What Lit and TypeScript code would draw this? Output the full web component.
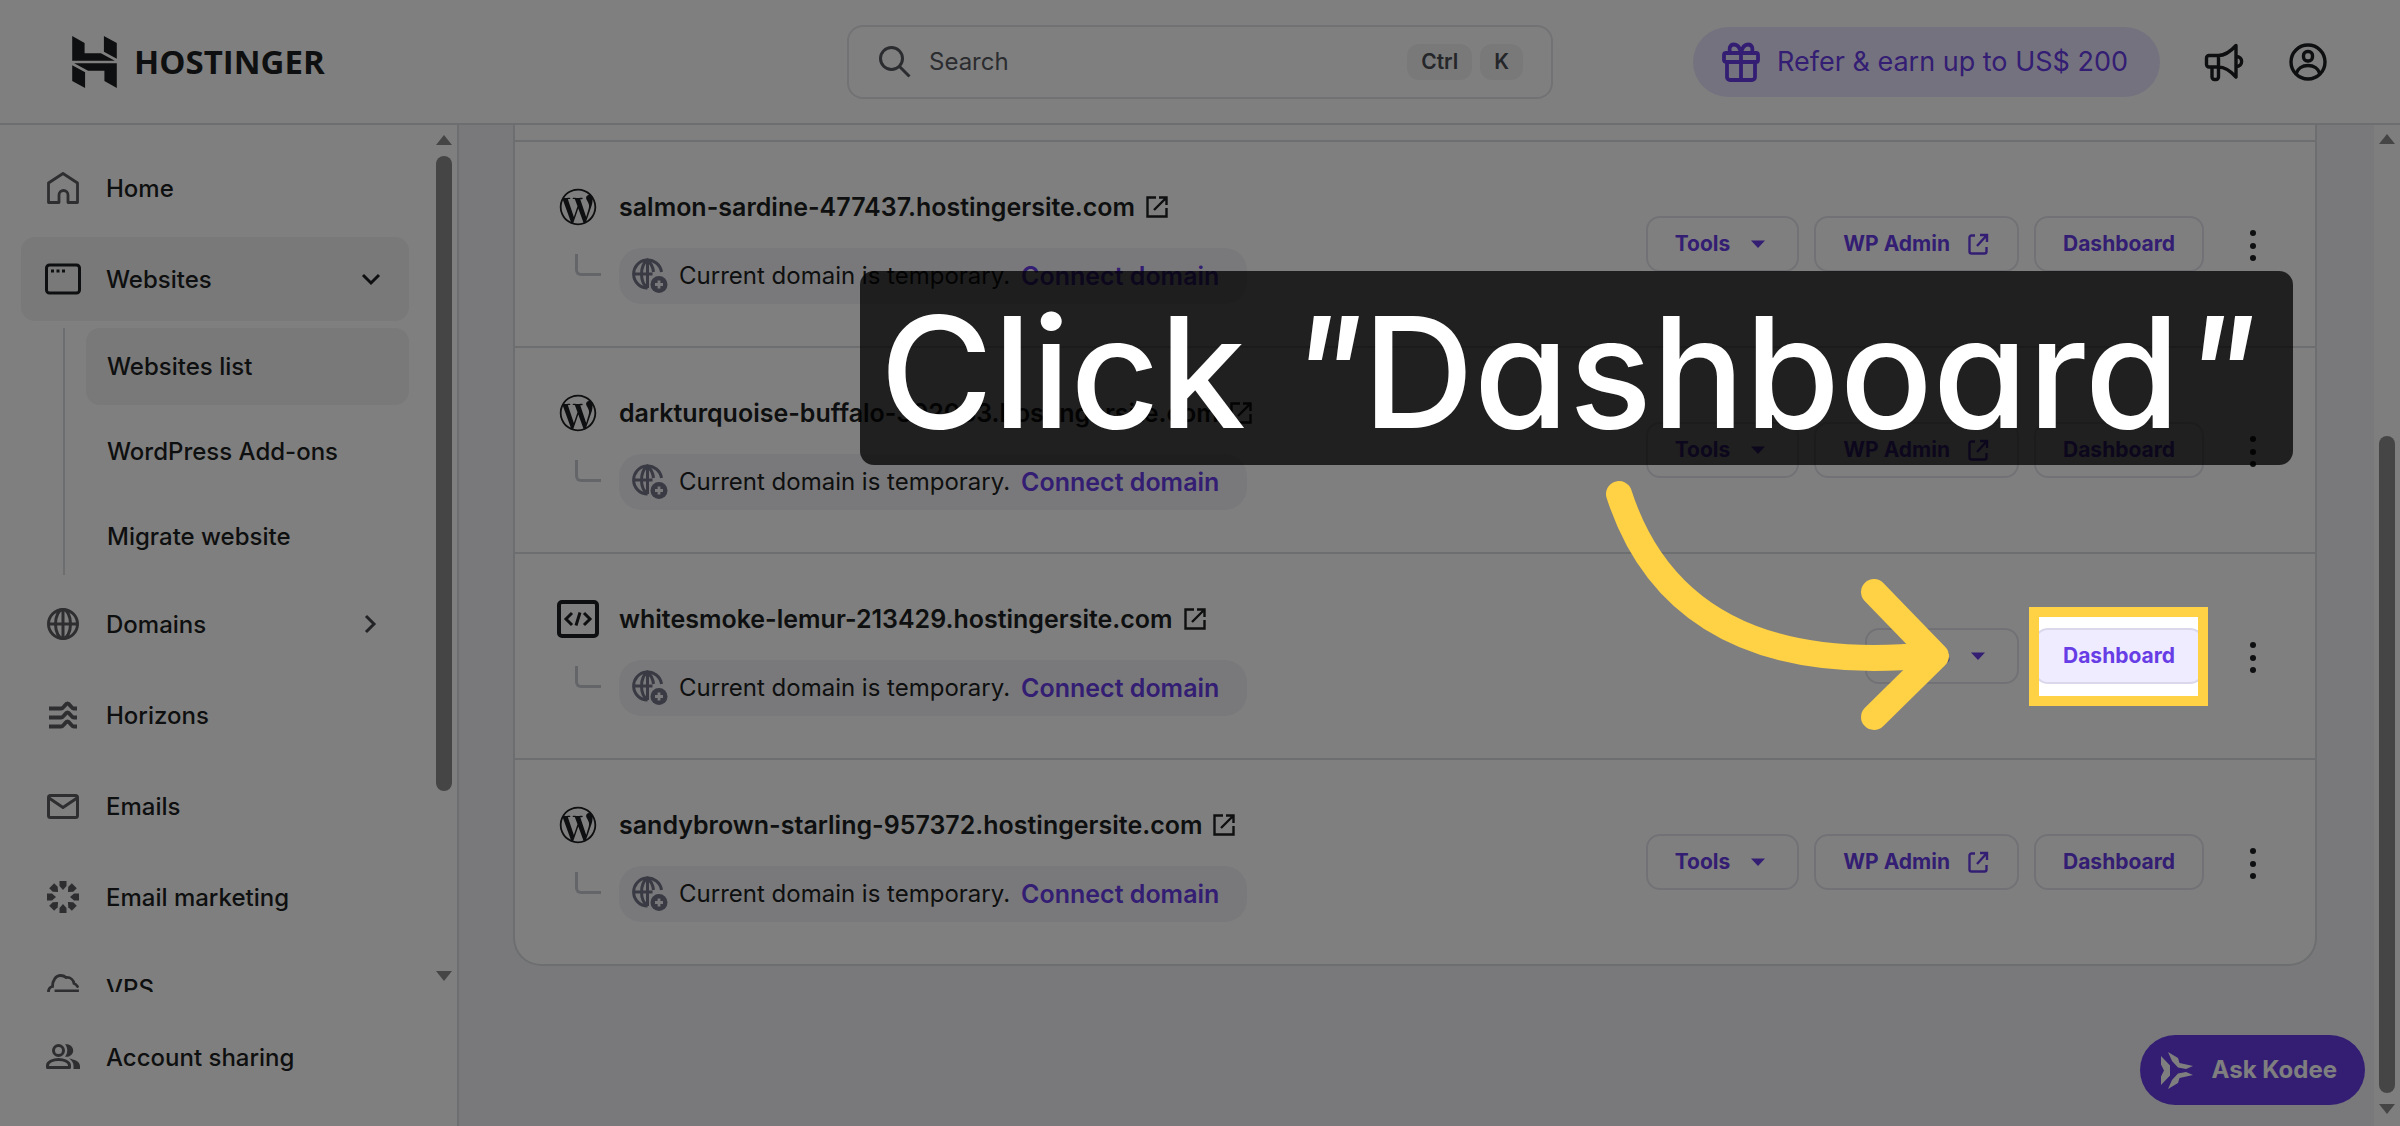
import { LitElement, html, css, svg, nothing, TemplateResult } from "lit";
import { customElement } from "lit/decorators.js";
import { classMap } from "lit/directives/class-map.js";

interface Site {
  domain: string;
  kind: "wordpress" | "code";
  highlighted?: boolean;
}

interface NavItem {
  label: string;
  icon: TemplateResult;
  chevron?: "down" | "right";
  active?: boolean;
  children?: string[];
}

const homeIcon = html`<svg class="nav-icon" viewBox="-2 -2 36 36" aria-hidden="true">
  <path d="M1.500 11 16 1.500 30.500 11V30.500H21V23a4.500 4.500 0 0 0-9 0v7.500H1.500Z" fill="none" stroke="currentColor" stroke-width="2.800" stroke-linejoin="round"/>
</svg>`;

const windowIcon = html`<svg class="nav-icon dark" viewBox="0 0 36 36" aria-hidden="true">
  <rect x="1.500" y="4" width="33" height="28" rx="3" fill="none" stroke="currentColor" stroke-width="3"/>
  <path d="M6 8.500h3v3H6zM11.500 8.500h3v3h-3zM17 8.500h3v3h-3z" fill="currentColor"/>
</svg>`;

const globeIcon = html`<svg class="nav-icon" viewBox="-2 -2 36 36" aria-hidden="true">
  <g fill="none" stroke="currentColor" stroke-width="3">
    <circle cx="16" cy="16" r="14.500"/><ellipse cx="16" cy="16" rx="7.500" ry="14.500"/>
    <path d="M16 1.500v29M1.500 16h29"/>
  </g>
</svg>`;

const horizonsIcon = html`<svg class="nav-icon" viewBox="-4 -4 36 36" aria-hidden="true">
  <g fill="none" stroke="currentColor" stroke-width="4" stroke-linejoin="round">
    <path d="M0 7.500h12c3 0 4-5 6.500-5S22 7.500 25 7.500h3"/>
    <path d="M0 16.500h12c3 0 4-5 6.500-5s3.500 5 6.500 5h3"/>
    <path d="M0 25.500h12c3 0 4-5 6.500-5s3.500 5 6.500 5h3"/>
  </g>
</svg>`;

const mailIcon = html`<svg class="nav-icon" viewBox="-2 -2 36 36" aria-hidden="true">
  <g fill="none" stroke="currentColor" stroke-width="3" stroke-linejoin="round">
    <rect x="1.500" y="5.500" width="29" height="22" rx="2"/><path d="m2 8 14 9.500L30 8"/>
  </g>
</svg>`;

const burstIcon = html`<svg class="nav-icon" viewBox="-18 -18 36 36" aria-hidden="true">
  ${[0, 45, 90, 135, 180, 225, 270, 315].map(
    (a) => svg`<path transform=${`rotate(${a})`} d="M-3.500 -16h7v5l-3.500 4-3.500-4z" fill="currentColor"/>`
  )}
</svg>`;

const cloudIcon = html`<svg class="nav-icon" viewBox="-2 -2 36 36" aria-hidden="true">
  <g fill="none" stroke="currentColor" stroke-width="2.800" stroke-linecap="round">
    <path d="M1.500 20c0-3 1.500-5 4-5.500C5.500 8 9 3.500 13.500 3.500c2.500 0 4 .5 5.500 2 5-.5 7.500 3 8 6 1.500.5 2.500 1.500 3.500 3"/>
    <path d="M9 19h21.500v6H9z"/>
  </g>
</svg>`;

const peopleIcon = html`<svg class="nav-icon" viewBox="0 0 36 36" aria-hidden="true">
  <g fill="none" stroke="currentColor" stroke-width="3">
    <circle cx="13.500" cy="11.500" r="5"/>
    <path d="M2.500 28.500v-2c0-4 6-6 11-6s11 2 11 6v2z" stroke-linejoin="round"/>
  </g>
  <path d="M20 5.300c4-.8 8.200 1.800 8.200 6.200s-4.200 7-8.200 6.200c3-3.500 3-9 0-12.400zM24 19.500c5 .8 11 3 11 7.500v3h-6.500v-3c0-3-1.500-5.500-4.500-7.500z" fill="currentColor"/>
</svg>`;

const wordpressIcon = html`<svg class="site-icon" viewBox="-1.500 -0.500 27 25" aria-hidden="true">
  <path fill="currentColor" d="M21.469 6.825c.84 1.537 1.318 3.3 1.318 5.175 0 3.979-2.156 7.456-5.363 9.325l3.295-9.527c.615-1.54.82-2.771.82-3.864 0-.405-.026-.78-.07-1.11m-7.981.105c.647-.03 1.232-.105 1.232-.105.582-.075.514-.93-.067-.899 0 0-1.755.135-2.88.135-1.064 0-2.85-.15-2.85-.15-.585-.03-.661.855-.075.885 0 0 .54.061 1.125.09l1.68 4.605-2.37 7.08L5.354 6.9c.649-.03 1.234-.1 1.234-.1.585-.075.516-.93-.065-.896 0 0-1.746.138-2.874.138-.2 0-.438-.008-.69-.015C4.911 3.15 8.235 1.215 12 1.215c2.809 0 5.365 1.072 7.286 2.833-.046-.003-.091-.009-.141-.009-1.06 0-1.812.923-1.812 1.914 0 .89.513 1.643 1.06 2.531.411.72.89 1.643.89 2.977 0 .915-.354 1.994-.821 3.479l-1.075 3.585-3.9-11.61.001.014zM12 22.784c-1.059 0-2.081-.153-3.048-.437l3.237-9.406 3.315 9.087c.024.053.05.101.078.149-1.12.393-2.325.609-3.582.609M1.211 12c0-1.564.336-3.05.935-4.39L7.29 21.709C3.694 19.96 1.212 16.271 1.211 12M12 0C5.385 0 0 5.385 0 12s5.385 12 12 12 12-5.385 12-12S18.615 0 12 0"/>
</svg>`;

const codeIcon = html`<svg class="site-icon" viewBox="0 0 42 38" aria-hidden="true">
  <rect x="2" y="2" width="38" height="34" rx="3" fill="none" stroke="currentColor" stroke-width="4"/>
  <path d="m15 13-6 6 6 6M27 13l6 6-6 6M23 12.500l-4 13" fill="none" stroke="currentColor" stroke-width="3"/>
</svg>`;

const externalIcon = html`<svg class="external-icon" viewBox="0 0 24 24" aria-hidden="true">
  <path d="M11 2.500H2.500v19h19V13M14 2.500h7.500V10M21 3 9 15" fill="none" stroke="currentColor" stroke-width="2.400"/>
</svg>`;

const adminIcon = html`<svg class="button-icon" viewBox="0 0 24 24" aria-hidden="true">
  <path d="M9 3.500H5.500a2 2 0 0 0-2 2v14a2 2 0 0 0 2 2h13a2 2 0 0 0 2-2V15M14 3h7v7M20.500 3.500 11 14" fill="none" stroke="currentColor" stroke-width="2.400"/>
</svg>`;

const caretIcon = html`<svg class="button-icon" viewBox="0 0 24 24" aria-hidden="true">
  <path d="M5 8.500h14l-7 7.500z" fill="currentColor"/>
</svg>`;

const domainIcon = html`<svg class="domain-icon" viewBox="0 0 36 36" aria-hidden="true">
  <g fill="none" stroke="currentColor" stroke-width="3">
    <path d="M29.500 14A14 14 0 1 0 15.500 30"/>
    <path d="M15.500 30c-4-3-6-8-6-14s2-11 6-14c3.500 3 5.500 7 6 12M15.500 2v28M1.500 16h19"/>
  </g>
  <circle cx="27" cy="26.500" r="8.500" fill="currentColor"/>
  <path d="M27 22.500v8M23 26.500h8" stroke="#f2f3f7" stroke-width="2.800"/>
</svg>`;

@customElement("app-root")
export class AppRoot extends LitElement {
  static styles = css`
    :host {
      display: block;
      font-family: Inter, "Liberation Sans", sans-serif;
      font-size: 24px;
      line-height: 32px;
      color: #1d1e20;
    }
    * {
      box-sizing: border-box;
    }
    button,
    input {
      font: inherit;
      color: inherit;
      background: none;
      border: 0;
      margin: 0;
      padding: 0;
    }
    a {
      color: inherit;
      text-decoration: none;
    }
    svg {
      display: block;
      flex: none;
    }
    .page {
      position: relative;
      display: flex;
      flex-direction: column;
      height: 100vh;
      overflow: hidden;
      background: #fff;
    }

    /* Top bar */
    .topbar {
      display: grid;
      grid-template-columns: 1fr minmax(0, 706px) 1fr;
      align-items: center;
      padding: 25px 72px 24px;
      border-bottom: 2px solid #dadce0;
    }
    .brand {
      display: flex;
      align-items: center;
      gap: 17px;
      font: 700 33px/40px "Open Sans", sans-serif;
    }
    .brand-mark {
      width: 45px;
      height: 52px;
    }
    .search {
      display: flex;
      align-items: center;
      gap: 8px;
      height: 74px;
      padding: 0 28px;
      border: 2px solid #e4e5e9;
      border-radius: 16px;
      color: #56585e;
    }
    .search-icon {
      width: 36px;
      height: 36px;
      margin-right: 8px;
    }
    .search input {
      flex: 1;
      min-width: 0;
      outline: none;
    }
    .search input::placeholder {
      color: #56585e;
      opacity: 1;
    }
    kbd {
      padding: 2px 14px;
      border-radius: 12px;
      background: #f2f3f4;
      font: 600 21px/32px Inter, sans-serif;
      color: #4a4c52;
    }
    .actions {
      display: flex;
      align-items: center;
      justify-content: flex-end;
      gap: 44px;
    }
    .refer {
      display: flex;
      align-items: center;
      gap: 16px;
      height: 70px;
      padding: 0 28px;
      border-radius: 35px;
      background: #ebe4ff;
      color: #673de6;
      font-size: 27px;
      white-space: nowrap;
    }
    .refer span {
      padding-right: 4px;
    }
    .action-icon {
      width: 40px;
      height: 40px;
    }

    /* Body */
    .body {
      display: flex;
      flex: 1;
      min-height: 0;
    }
    .sidebar {
      display: flex;
      flex-direction: column;
      width: 459px;
      border-right: 2px solid #dadce0;
      font-weight: 500;
    }
    .nav-scroll {
      display: flex;
      flex: 1;
      min-height: 0;
      padding-right: 5px;
    }
    .nav {
      flex: 1;
      display: flex;
      flex-direction: column;
      gap: 7px;
      padding: 21px 27px 0 21px;
      overflow: hidden;
    }
    .nav-item {
      display: flex;
      flex: none;
      align-items: center;
      gap: 25px;
      height: 84px;
      padding: 0 26px 0 24px;
      border-radius: 14px;
    }
    .nav-item.active,
    .sub-item.active {
      background: #f2f2f3;
    }
    .nav-label {
      flex: 1;
      padding-top: 2px;
    }
    .nav-icon {
      width: 36px;
      height: 36px;
      color: #5c5d62;
    }
    .nav-icon.dark,
    .chevron.dark {
      color: #1d1e20;
    }
    .chevron {
      width: 24px;
      height: 24px;
      color: #45464b;
    }
    .submenu {
      display: flex;
      flex: none;
      flex-direction: column;
      gap: 8px;
      margin-left: 42px;
      padding-left: 21px;
      border-left: 2px solid #dadce0;
    }
    .sub-item {
      display: flex;
      align-items: center;
      height: 77px;
      padding: 0 21px;
      border-radius: 14px;
    }
    .sidebar-foot {
      padding: 23px 27px 27px 21px;
    }

    .track {
      display: flex;
      flex-direction: column;
      align-items: center;
      width: 16px;
      padding: 10px 0 11px;
      color: #8a8a8a;
    }
    .track svg {
      width: 16px;
      height: 10px;
    }
    .track-space {
      flex: 1;
      align-self: stretch;
      display: flex;
      flex-direction: column;
      margin: 11px 0;
    }
    .thumb {
      height: 79%;
      border-radius: 8px;
      background: #8a8a8a;
    }
    .page-track {
      width: 26px;
      padding: 9px 5px 12px;
      background: #fcfcfc;
    }
    .page-track .track-space {
      justify-content: flex-end;
    }
    .page-track .thumb {
      height: 70%;
    }

    .content {
      flex: 1;
      min-width: 0;
      padding: 0 57px 0 54px;
      background: #f2f3f7;
    }
    .card {
      border: 2px solid #dadce0;
      border-top: 0;
      border-radius: 0 0 28px 28px;
      background: #fff;
    }
    .card-head {
      height: 15px;
    }
    .site {
      display: flex;
      align-items: center;
      justify-content: space-between;
      padding: 46px 42px 42px;
      border-top: 2px solid #dadce0;
    }
    .site-info {
      display: grid;
      grid-template-columns: 42px auto;
      gap: 22px 20px;
    }
    .site-icon {
      width: 42px;
      height: 38px;
    }
    .site-title {
      display: flex;
      align-items: center;
      gap: 10px;
      font-size: 25px;
      font-weight: 600;
    }
    .external-icon,
    .button-icon {
      width: 24px;
      height: 24px;
    }
    .elbow {
      width: 26px;
      height: 22px;
      margin: 6px 0 0 18px;
      border: solid #c8cad2;
      border-width: 0 0 3px 3px;
      border-radius: 0 0 0 6px;
    }
    .notice {
      display: flex;
      align-items: center;
      justify-self: start;
      gap: 11px;
      height: 56px;
      padding: 0 28px 0 13px;
      border-radius: 22px;
      background: #f2f3f7;
    }
    .domain-icon {
      width: 36px;
      height: 36px;
      color: #727586;
    }
    .connect {
      font-size: 25px;
      font-weight: 600;
      color: #673de6;
    }
    .site-actions {
      display: flex;
      align-items: center;
      gap: 15px;
      margin-bottom: 4px;
    }
    .button {
      display: flex;
      align-items: center;
      gap: 16px;
      height: 56px;
      padding: 0 27px;
      border: 2px solid #e4e5ec;
      border-radius: 14px;
      color: #673de6;
      font-size: 21px;
      font-weight: 700;
    }
    .more {
      width: 40px;
      height: 40px;
      margin-left: 14px;
    }

    /* Dimmed page with one control lifted above it */
    .scrim {
      position: absolute;
      inset: 0;
      z-index: 2;
      background: rgba(0, 0, 0, 0.5);
      pointer-events: none;
    }
    .spotlight {
      position: relative;
      z-index: 3;
    }
    .spotlight::before,
    .spotlight::after {
      content: "";
      position: absolute;
      inset: -21px -4px -22px -5px;
      border: 10px solid #ffd144;
      pointer-events: none;
    }
    .spotlight::before {
      z-index: -1;
      background: #fff;
    }
    .spotlight .button {
      background: #f0ecff;
      border-color: #dcd8ec;
    }
    .callout {
      position: absolute;
      z-index: 4;
      top: 271px;
      right: 107px;
      padding: 8px 37px 0 20px;
      border-radius: 14px;
      background: rgba(0, 0, 0, 0.75);
      color: #fff;
      font-size: 154px;
      line-height: 186px;
      font-weight: 500;
      font-feature-settings: "cv11";
      white-space: nowrap;
    }
    .arrow {
      position: absolute;
      z-index: 4;
      top: 470px;
      right: 440px;
      width: 360px;
      height: 270px;
    }
    .kodee {
      position: absolute;
      z-index: 1;
      right: 35px;
      bottom: 21px;
      display: flex;
      align-items: center;
      gap: 18px;
      height: 70px;
      padding: 0 28px 0 21px;
      border-radius: 35px;
      background: #673de6;
      color: #fff;
      font-weight: 700;
    }
    .kodee svg {
      width: 33px;
      height: 37px;
    }
  `;

  private nav: NavItem[] = [
    { label: "Home", icon: homeIcon },
    {
      label: "Websites",
      icon: windowIcon,
      chevron: "down",
      active: true,
      children: ["Websites list", "WordPress Add-ons", "Migrate website"],
    },
    { label: "Domains", icon: globeIcon, chevron: "right" },
    { label: "Horizons", icon: horizonsIcon },
    { label: "Emails", icon: mailIcon },
    { label: "Email marketing", icon: burstIcon },
    { label: "VPS", icon: cloudIcon },
  ];

  private sites: Site[] = [
    { domain: "salmon-sardine-477437.hostingersite.com", kind: "wordpress" },
    { domain: "darkturquoise-buffalo-392083.hostingersite.com", kind: "wordpress" },
    { domain: "whitesmoke-lemur-213429.hostingersite.com", kind: "code", highlighted: true },
    { domain: "sandybrown-starling-957372.hostingersite.com", kind: "wordpress" },
  ];

  private renderNavItem(item: NavItem) {
    return html`
      <a href="#" class=${classMap({ "nav-item": true, active: !!item.active })}>
        ${item.icon}
        <span class="nav-label">${item.label}</span>
        ${item.chevron
          ? html`<svg class=${classMap({ chevron: true, dark: item.chevron === "down" })} viewBox="0 0 24 24" aria-hidden="true">
              <path d=${item.chevron === "down" ? "m4 8 8 8 8-8" : "m7 4 8 8-8 8"} fill="none" stroke="currentColor" stroke-width="3"/>
            </svg>`
          : nothing}
      </a>
      ${item.children
        ? html`<div class="submenu">
            ${item.children.map(
              (label, i) => html`<a href="#" class=${classMap({ "sub-item": true, active: i === 0 })}>${label}</a>`
            )}
          </div>`
        : nothing}
    `;
  }

  private renderTrack(extra: string) {
    return html`<div class="track ${extra}" aria-hidden="true">
      <svg viewBox="0 0 16 10"><path d="M0 10 8 0l8 10z" fill="currentColor"/></svg>
      <div class="track-space"><div class="thumb"></div></div>
      <svg viewBox="0 0 16 10"><path d="M0 0h16L8 10z" fill="currentColor"/></svg>
    </div>`;
  }

  private renderSite(site: Site) {
    const dashboard = html`<button class="button" type="button">Dashboard</button>`;
    return html`<article class="site">
      <div class="site-info">
        ${site.kind === "code" ? codeIcon : wordpressIcon}
        <a class="site-title" href="#">${site.domain}${externalIcon}</a>
        <div class="elbow"></div>
        <div class="notice">
          ${domainIcon}
          <span>Current domain is temporary.</span>
          <a class="connect" href="#">Connect domain</a>
        </div>
      </div>
      <div class="site-actions">
        <button class="button" type="button">Tools ${caretIcon}</button>
        ${site.kind === "wordpress"
          ? html`<button class="button" type="button">WP Admin ${adminIcon}</button>`
          : nothing}
        ${site.highlighted ? html`<div class="spotlight">${dashboard}</div>` : dashboard}
        <button class="more" type="button" aria-label="More options">
          <svg viewBox="0 0 40 40" width="40" height="40" aria-hidden="true">
            <g fill="#1d1e20"><circle cx="20" cy="9" r="3"/><circle cx="20" cy="22" r="3"/><circle cx="20" cy="34" r="3"/></g>
          </svg>
        </button>
      </div>
    </article>`;
  }

  render() {
    return html`<div class="page">
      <header class="topbar">
        <a class="brand" href="#">
          <svg class="brand-mark" viewBox="0 0 45 52.500" aria-hidden="true">
            <path fill="currentColor" d="M0 0 12.500 7v10.500H29L43 25H0zM32 0l13 7v16l-13-7zM45 52.500l-12.500-7V35H16L2 27.500h43zM13 52.500l-13-7v-16l13 7z"/>
          </svg>
          HOSTINGER
        </a>
        <label class="search">
          <svg class="search-icon" viewBox="0 0 36 36" aria-label="Search">
            <g fill="none" stroke="currentColor" stroke-width="3"><circle cx="14.500" cy="14.500" r="11"/><path d="m22.500 22.500 10 10"/></g>
          </svg>
          <input type="text" placeholder="Search" />
          <kbd>Ctrl</kbd>
          <kbd>K</kbd>
        </label>
        <div class="actions">
          <a class="refer" href="#">
            <svg class="action-icon" viewBox="0 0 40 40" aria-hidden="true">
              <g fill="none" stroke="currentColor" stroke-width="3.800" stroke-linejoin="round">
                <rect x="3" y="11" width="34" height="9" rx="2"/>
                <path d="M6 20v15a3 3 0 0 0 3 3h22a3 3 0 0 0 3-3V20M20 11v27"/>
                <path d="M20 11c-1-5-3.500-8.500-7-8.500-4.500 0-5.500 5-3.500 8.500M20 11c1-5 3.500-8.500 7-8.500 4.500 0 5.500 5 3.500 8.500"/>
              </g>
            </svg>
            <span>Refer &amp; earn up to US$ 200</span>
          </a>
          <button type="button" aria-label="Announcements">
            <svg class="action-icon" viewBox="0 0 40 40" aria-hidden="true">
              <g fill="none" stroke="currentColor" stroke-width="3.400" stroke-linejoin="round">
                <path d="M14.500 13.500H5a2.500 2.500 0 0 0-2.500 2.500v6.500A2.500 2.500 0 0 0 5 25h9.500c6.500 0 12.500 4.500 17.500 10V3.500c-5 5.500-11 10-17.500 10zM14.500 13.500V25"/>
                <path d="M8 25.500V35a2.500 2.500 0 0 0 2.500 2.500h1.500a2.500 2.500 0 0 0 2.500-2.500V25.500M32 14.500c7.500 0 7.500 10 0 10"/>
              </g>
            </svg>
          </button>
          <button type="button" aria-label="Account">
            <svg class="action-icon" viewBox="0 0 40 40" aria-hidden="true">
              <g fill="none" stroke="currentColor" stroke-width="3.400">
                <circle cx="20" cy="20" r="17"/><rect x="15.500" y="9.500" width="9" height="9.500" rx="4"/>
                <path d="M8 32c1.500-5.500 6.500-8.500 12-8.500s10.500 3 12 8.500"/>
              </g>
            </svg>
          </button>
        </div>
      </header>

      <div class="body">
        <aside class="sidebar">
          <div class="nav-scroll">
            <nav class="nav">${this.nav.map((item) => this.renderNavItem(item))}</nav>
            ${this.renderTrack("")}
          </div>
          <div class="sidebar-foot">
            ${this.renderNavItem({ label: "Account sharing", icon: peopleIcon })}
          </div>
        </aside>
        <main class="content">
          <section class="card">
            <div class="card-head"></div>
            ${this.sites.map((site) => this.renderSite(site))}
          </section>
        </main>
        ${this.renderTrack("page-track")}
      </div>

      <button class="kodee" type="button">
        <svg viewBox="0 0 33 37" aria-hidden="true">
          <path fill="currentColor" d="M0 4l9 9.500V23.500L0 33v-8.500l3-6-3-6zM7 0l10 6 1.500 5L32 14l-7 3-8-1.500L11 9zM7 37l10-6 1.500-5L32 23l-7-3-8 1.500L11 28z"/>
        </svg>
        Ask Kodee
      </button>

      <div class="scrim"></div>
      <div class="callout" role="note">Click <i>"</i>Dashboard<i>"</i></div>
      <svg class="arrow" viewBox="1600 470 360 270" aria-hidden="true">
        <g fill="none" stroke="#ffd144" stroke-width="26" stroke-linecap="round" stroke-linejoin="round">
          <path d="M1619 494C1650 590 1730 675 1930 655"/>
          <path d="M1874 592 1936 656 1874 717"/>
        </g>
      </svg>
    </div>`;
  }
}
